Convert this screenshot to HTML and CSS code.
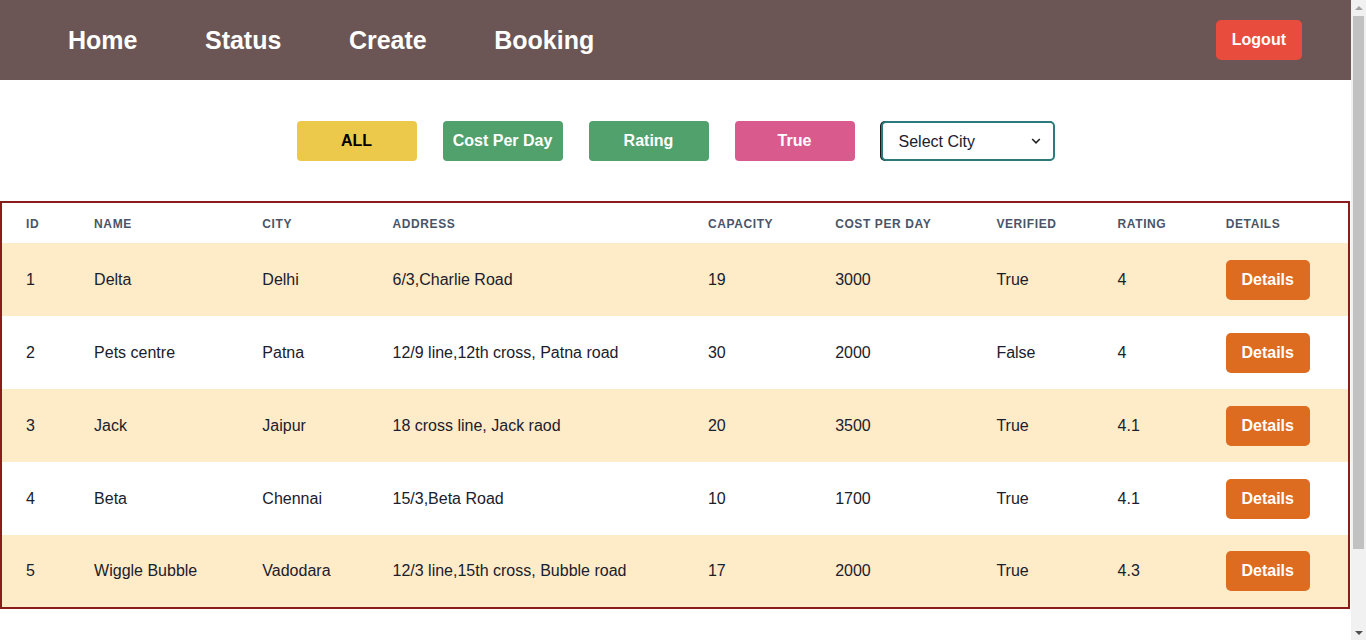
FILE: index.html
```html
<!DOCTYPE html>
<html lang="en">
<head>
<meta charset="utf-8">
<title>Pet Centres</title>
<link rel="stylesheet" href="styles.css">
</head>
<body>
<div class="page">
  <header class="navbar">
    <nav class="nav-links">
      <a href="#" class="nav-link">Home</a>
      <a href="#" class="nav-link">Status</a>
      <a href="#" class="nav-link">Create</a>
      <a href="#" class="nav-link">Booking</a>
    </nav>
    <button class="logout">Logout</button>
  </header>

  <section class="filters">
    <button class="filter filter-all">ALL</button>
    <button class="filter filter-green">Cost Per Day</button>
    <button class="filter filter-green">Rating</button>
    <button class="filter filter-pink">True</button>
    <div class="select-wrap">
      <select class="city-select">
        <option>Select City</option>
        <option>Delhi</option>
        <option>Patna</option>
        <option>Jaipur</option>
        <option>Chennai</option>
        <option>Vadodara</option>
      </select>
      <svg class="chevron" width="10" height="6" viewBox="0 0 10 6" aria-hidden="true"><path d="M1.2 1 L5 4.8 L8.8 1" fill="none" stroke="#222" stroke-width="1.6"/></svg>
    </div>
  </section>

  <main class="table-wrap">
    <table class="centres">
      <colgroup>
        <col class="c-id"><col class="c-name"><col class="c-city"><col class="c-addr"><col class="c-cap"><col class="c-cost"><col class="c-ver"><col class="c-rate"><col class="c-det">
      </colgroup>
      <thead>
        <tr>
          <th>ID</th><th>Name</th><th>City</th><th>Address</th><th>Capacity</th><th>Cost Per Day</th><th>Verified</th><th>Rating</th><th>Details</th>
        </tr>
      </thead>
      <tbody>
        <tr class="odd"><td>1</td><td>Delta</td><td>Delhi</td><td>6/3,Charlie Road</td><td>19</td><td>3000</td><td>True</td><td>4</td><td><button class="details">Details</button></td></tr>
        <tr><td>2</td><td>Pets centre</td><td>Patna</td><td>12/9 line,12th cross, Patna road</td><td>30</td><td>2000</td><td>False</td><td>4</td><td><button class="details">Details</button></td></tr>
        <tr class="odd"><td>3</td><td>Jack</td><td>Jaipur</td><td>18 cross line, Jack raod</td><td>20</td><td>3500</td><td>True</td><td>4.1</td><td><button class="details">Details</button></td></tr>
        <tr><td>4</td><td>Beta</td><td>Chennai</td><td>15/3,Beta Road</td><td>10</td><td>1700</td><td>True</td><td>4.1</td><td><button class="details">Details</button></td></tr>
        <tr class="odd"><td>5</td><td>Wiggle Bubble</td><td>Vadodara</td><td>12/3 line,15th cross, Bubble road</td><td>17</td><td>2000</td><td>True</td><td>4.3</td><td><button class="details">Details</button></td></tr>
      </tbody>
    </table>
  </main>
</div>

<div class="scrollbar" aria-hidden="true">
  <div class="sb-btn"><span class="sb-arrow sb-up"></span></div>
  <div class="sb-track"><div class="sb-thumb"></div></div>
  <div class="sb-btn"><span class="sb-arrow sb-down"></span></div>
</div>
</body>
</html>
```

FILE: styles.css
```css
* { box-sizing: border-box; }

html, body {
  margin: 0;
  padding: 0;
}

body {
  font-family: "Liberation Sans", Arial, sans-serif;
  color: #1a202c;
  background: #ffffff;
  padding-right: 15px;
}

.page {
  width: 1351px;
}

/* fake classic scrollbar */
.scrollbar {
  position: fixed;
  top: 0;
  right: 0;
  width: 15px;
  height: 100vh;
  background: #f1f1f1;
  display: flex;
  flex-direction: column;
}

.sb-btn {
  height: 15px;
  display: flex;
  align-items: center;
  justify-content: center;
}

.sb-arrow {
  width: 0;
  height: 0;
  border-left: 4px solid transparent;
  border-right: 4px solid transparent;
}

.sb-up { border-bottom: 4px solid #a3a3a3; }
.sb-down { border-top: 4px solid #505050; }

.sb-track {
  flex: 1;
  padding: 1px 2px 0;
}

.sb-thumb {
  height: 533px;
  background: #c1c1c1;
}

.navbar {
  height: 80px;
  background: #6b5655;
  display: flex;
  align-items: center;
  justify-content: space-between;
  padding: 0 49px 0 68px;
}

.nav-links {
  display: flex;
  gap: 67.5px;
}

.nav-link {
  color: #ffffff;
  text-decoration: none;
  font-weight: 700;
  font-size: 25px;
}

.logout {
  height: 40px;
  padding: 0 16px;
  border: none;
  border-radius: 5px;
  background: #e74c3c;
  color: #ffffff;
  font-family: inherit;
  font-weight: 700;
  font-size: 16px;
}

.filters {
  display: flex;
  justify-content: center;
  align-items: center;
  gap: 26px;
  padding: 41px 0 40px;
}

.filter {
  width: 120px;
  height: 40px;
  border: none;
  border-radius: 4px;
  font-family: inherit;
  font-weight: 700;
  font-size: 16px;
  color: #ffffff;
}

.filter-all { background: #ecc94b; color: #000000; }
.filter-green { background: #51a16c; }
.filter-pink { background: #d95b8e; }

.select-wrap {
  position: relative;
  width: 174px;
  height: 40px;
}

.city-select {
  -webkit-appearance: none;
  appearance: none;
  width: 100%;
  height: 100%;
  border: 2px solid #2c7a7b;
  border-radius: 5px;
  background: #ffffff;
  box-shadow: -1px 0 0 #1a1a1a;
  padding: 0 30px 0 16px;
  font-family: inherit;
  font-size: 16px;
  color: #1a202c;
}

.chevron {
  position: absolute;
  right: 14px;
  top: 17px;
  pointer-events: none;
}

.table-wrap {
  margin-bottom: 125px;
}

.centres {
  width: 1350px;
  table-layout: fixed;
  border-collapse: collapse;
  border: 2px solid #8b1c1c;
}

.c-id { width: 69px; }
.c-name { width: 168px; }
.c-city { width: 130px; }
.c-addr { width: 315px; }
.c-cap { width: 127px; }
.c-cost { width: 161px; }
.c-ver { width: 121px; }
.c-rate { width: 108px; }
.c-det { width: 147px; }

.centres th {
  height: 41px;
  padding: 1px 24px 0;
  text-align: left;
  font-size: 12px;
  font-weight: 700;
  letter-spacing: 0.05em;
  text-transform: uppercase;
  color: #4a5568;
}

.centres td {
  height: 73px;
  padding: 0 24px;
  font-size: 16px;
  color: #1a202c;
  vertical-align: middle;
  white-space: nowrap;
}

.centres tr.odd td { background: #feebc8; }

.details {
  width: 84px;
  height: 40px;
  border: none;
  border-radius: 5px;
  background: #dd6b20;
  color: #ffffff;
  font-family: inherit;
  font-weight: 700;
  font-size: 16px;
}
```
